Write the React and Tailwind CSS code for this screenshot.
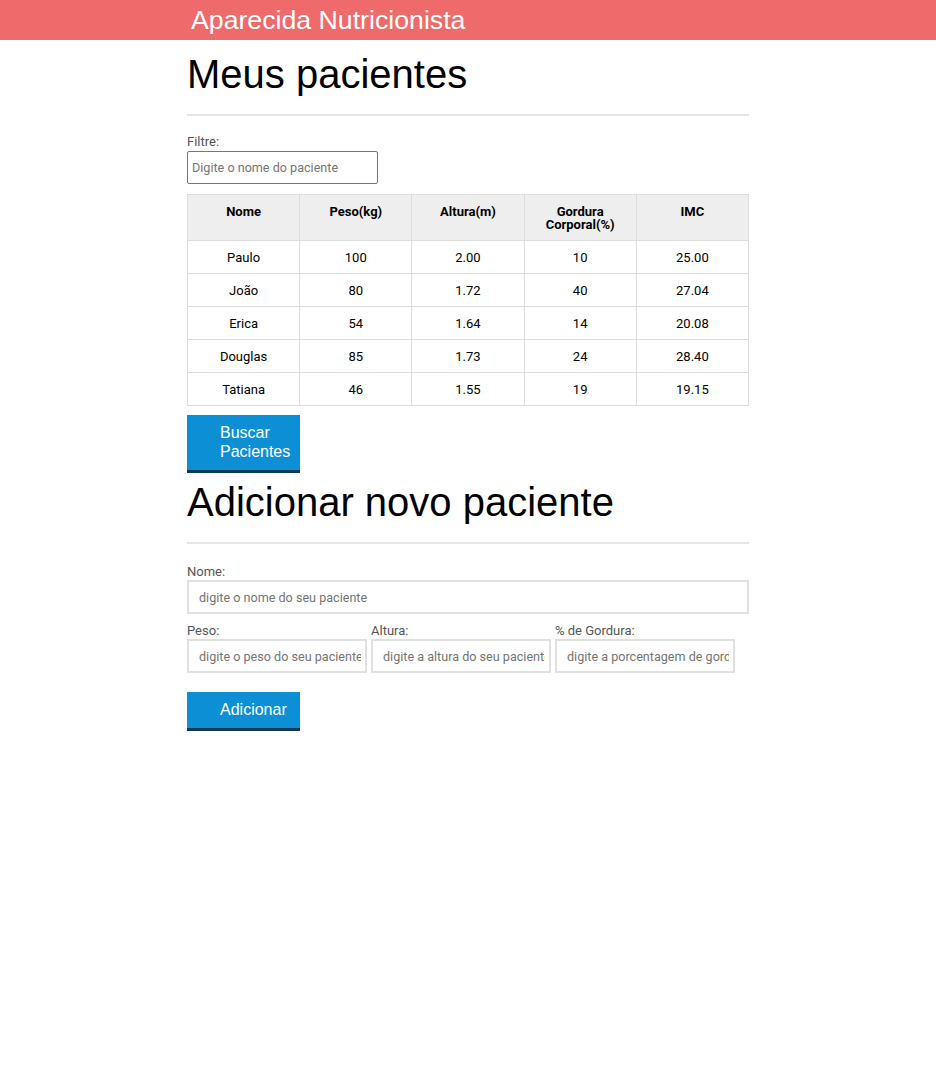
const pacientes = [
  { nome: 'Paulo', peso: '100', altura: '2.00', gordura: '10', imc: '25.00' },
  { nome: 'João', peso: '80', altura: '1.72', gordura: '40', imc: '27.04' },
  { nome: 'Erica', peso: '54', altura: '1.64', gordura: '14', imc: '20.08' },
  { nome: 'Douglas', peso: '85', altura: '1.73', gordura: '24', imc: '28.40' },
  { nome: 'Tatiana', peso: '46', altura: '1.55', gordura: '19', imc: '19.15' },
]

const heads = ['Nome', 'Peso(kg)', 'Altura(m)', 'Gordura Corporal(%)', 'IMC']

const body = { fontFamily: 'Roboto, "Liberation Sans", sans-serif' }
const arial = { fontFamily: '"Liberation Sans", Arial, sans-serif' }

function Button({ children }) {
  return (
    <button className="block w-[113px] bg-[#0d8fd5] border-b-[3px] border-[#0b3a58] text-white text-[16px] leading-[19px] text-left pl-[33px] pr-2 pt-[8px] pb-[9px]" style={arial}>
      {children}
    </button>
  )
}

export default function App() {
  return (
    <div className="min-h-[1076px] bg-white text-black" style={body}>
      <header className="h-10 bg-[#ef6a6a]">
        <div className="w-[562px] mx-auto pl-1">
          <h1 className="text-white text-[26.7px] leading-10" style={arial}>Aparecida Nutricionista</h1>
        </div>
      </header>

      <main className="w-[562px] mx-auto">
        <section>
          <h2 className="text-[40px] leading-[46px] mt-[11px]" style={arial}>Meus pacientes</h2>
          <hr className="mt-[17px] border-t-2 border-[#e5e5e5]" />
          <label className="block mt-[18px] text-[13px] leading-[16px] text-[#555]">Filtre:</label>
          <input
            className="mt-[1px] w-[191px] h-[33px] border border-[#767676] rounded-[2px] px-[4px] text-[12.6px] placeholder:text-[#757575] outline-none"
            placeholder="Digite o nome do paciente"
          />
          <table className="mt-[10px] w-full border-collapse text-[13px] table-fixed">
            <thead>
              <tr className="bg-[#eeeeee]">
                {heads.map(h => (
                  <th key={h} className="border border-[#dddddd] h-[46px] align-top pt-[10px] px-2 font-bold leading-[13px]">{h}</th>
                ))}
              </tr>
            </thead>
            <tbody>
              {pacientes.map(p => (
                <tr key={p.nome}>
                  {[p.nome, p.peso, p.altura, p.gordura, p.imc].map((v, i) => (
                    <td key={i} className="border border-[#dddddd] h-[33px] text-center pt-[1px]">{v}</td>
                  ))}
                </tr>
              ))}
            </tbody>
          </table>
          <div className="mt-[9px]">
            <Button>Buscar Pacientes</Button>
          </div>
        </section>

        <section>
          <h2 className="text-[40px] leading-[46px] mt-[6px]" style={arial}>Adicionar novo paciente</h2>
          <hr className="mt-[17px] border-t-2 border-[#e5e5e5]" />
          <label className="block mt-[20px] text-[13px] leading-[16px] text-[#555]">Nome:</label>
          <input
            className="w-full h-[34px] border-2 border-[#e0e0e0] pl-[10px] pr-[4px] text-[12.6px] placeholder:text-[#757575] outline-none"
            placeholder="digite o nome do seu paciente"
          />
          <div className="flex gap-[4px] mt-[9px]">
            {[
              ['Peso:', 'digite o peso do seu paciente'],
              ['Altura:', 'digite a altura do seu paciente'],
              ['% de Gordura:', 'digite a porcentagem de gordura do seu paciente'],
            ].map(([l, ph]) => (
              <div key={l} className="w-[180px]">
                <label className="block text-[13px] leading-[16px] text-[#555]">{l}</label>
                <input
                  className="w-full h-[34px] border-2 border-[#e0e0e0] pl-[10px] pr-[4px] text-[12.6px] placeholder:text-[#757575] outline-none"
                  placeholder={ph}
                />
              </div>
            ))}
          </div>
          <div className="mt-[19px]">
            <Button>Adicionar</Button>
          </div>
        </section>
      </main>
    </div>
  )
}
